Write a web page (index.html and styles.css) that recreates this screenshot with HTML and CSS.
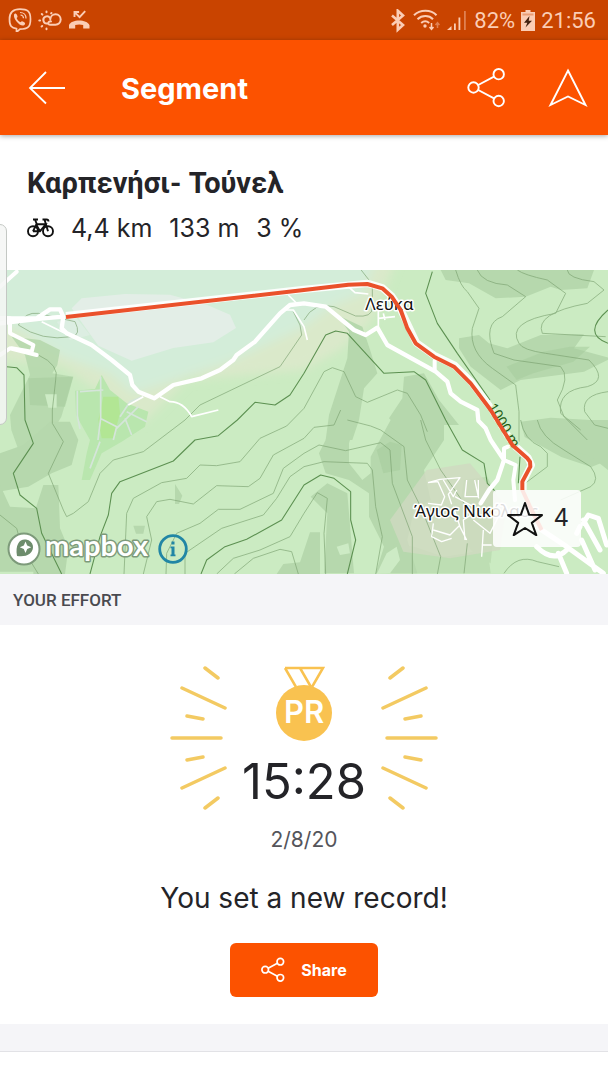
FILE: index.html
```html
<!DOCTYPE html>
<html lang="en">
<head>
<meta charset="utf-8">
<meta name="viewport" content="width=device-width, initial-scale=1">
<title>Segment</title>
<link rel="stylesheet" href="styles.css">
</head>
<body>
<div class="status">
  <div class="status-group">
    <svg class="status-icon" viewBox="0 0 24 24" width="24" height="24" fill="none" stroke="currentColor" stroke-width="1.7"><path d="M12 1.2c7.500 0 10.500 2 10.500 10s-3 10-10.500 10l-3.500 3v-3.500C3.500 20 1.500 18 1.500 11.200S4.500 1.200 12 1.200z"/><path fill="currentColor" stroke="none" d="M6 6.500c1-1.500 2-1.500 3 .5s.5 2.200-.4 3c.7 2 2 3.300 4 4.200.9-1.200 1.600-1.300 3.200-.2 1.800 1.200 1.700 2 .2 3.300C12 19 5 11 6 6.500z"/><path stroke-width="1.200" d="M12 4.500c4 0 6 2.500 6 6M12.500 7c2 .2 3 1.500 3 3.200"/></svg>
    <svg class="status-icon" viewBox="0 0 24 24" width="24" height="24" fill="none" stroke="currentColor" stroke-width="2" stroke-linecap="round"><path d="M9.500 15.500a3.600 3.600 0 1 1 2.500-5.500M13 13.500c-2.500-1-4.500 3.200-.5 3.200h5a5.200 5.200 0 1 0-5.200-5.500M8.500 3.500v.8M3.800 6l.6.6M1.300 12.500h.8M3.600 18.500l.6-.5M8.500 20.500v.8M13.500 5l-.4.4"/></svg>
    <svg class="status-icon" viewBox="0 0 24 24" width="24" height="24"><path fill="currentColor" d="M1 20.500v-3.200C3 11 19 11 21.500 17.300v3.200h-6.300v-3.400c-2.600-.9-5.400-.9-8 0v3.400z"/><path fill="none" stroke="currentColor" stroke-width="1.900" d="M6.500 9V4h4.600M6.800 4.300l4.800 4.800 5.600-6"/></svg>
  </div>
  <div class="status-group status-right">
    <svg viewBox="0 0 16 24" width="16" height="24" fill="none" stroke="currentColor" stroke-width="2.600"><path d="M2 6.500l11 9.500-5.200 4.800V1.700L13 6.500 2 16"/></svg>
    <svg viewBox="0 0 28 24" width="28" height="24" fill="none" stroke="currentColor" stroke-width="2"><path d="M2 6.200c6-6 17-6 22.500 0M5.500 10.200c4.500-4.200 11.500-4.200 15.500 0M9.200 14c2.600-2.200 5.500-2.200 8 0"/><circle cx="13" cy="17" r="1.700" fill="currentColor" stroke="none"/><path stroke-width="1.500" d="M19.500 14v6M17.500 18l2 2.300 2-2.300"/><path stroke-width="1.500" opacity=".45" d="M25.500 19v-5.500M23.500 16l2-2.300 2 2.300"/></svg>
    <svg viewBox="0 0 22 24" width="22" height="24" fill="currentColor"><path d="M1 21l4.500-4v4zM8 14.500h1.800V21H8zM12.500 8.500h1.800V21h-1.800z"/><path opacity=".45" d="M18 2h1.800v19H18z"/></svg>
    <span>82%</span>
    <svg viewBox="0 0 14 24" width="14" height="24"><path fill="currentColor" d="M4.500 1h5v2H14v19H0v-19h4.500z"/><path fill="#c94400" opacity=".35" d="M1.500 4.500h11v2h-11z"/><path fill="#43210f" d="M8.500 7L3 13.700h3.300L4.500 18.500l6.500-6.800H7.700z"/></svg>
    <span>21:56</span>
  </div>
</div>

<header class="appbar">
  <button class="icon-btn" aria-label="Back"><svg viewBox="0 0 38 36" width="38" height="36" fill="none" stroke="#fff" stroke-width="1.800"><path d="M37 18H2M18 2L2 18l16 15.500"/></svg></button>
  <h1 class="appbar-title">Segment</h1>
  <button class="icon-btn" aria-label="Share segment"><svg viewBox="0 0 40 40" width="40" height="40" fill="none" stroke="#fff" stroke-width="1.900"><circle cx="6.500" cy="19.500" r="5.200"/><circle cx="31.700" cy="6.200" r="5.200"/><circle cx="31.700" cy="33" r="5.200"/><path d="M11.200 17L27 8.700M11.200 22L27 30.400"/></svg></button>
  <button class="icon-btn" aria-label="Navigate"><svg viewBox="0 0 40 40" width="40" height="40" fill="none" stroke="#fff" stroke-width="1.900"><path d="M20 2.500L37.500 37 20 28.500 2.500 37z"/></svg></button>
</header>

<main>
  <section class="info">
    <h2 class="name">Καρπενήσι- Τούνελ</h2>
    <div class="meta">
      <svg viewBox="0 0 27 20" width="27" height="20" fill="none" stroke="#111" stroke-width="1.900"><circle cx="6" cy="13.300" r="5"/><circle cx="21" cy="13.300" r="5"/><path d="M6 13.300l3.400-7h9.300l-5.700 7H6M9.400 7l3.600 6.300M6 1.500h5M8 1.500l2 5.200M15.500 1.500h4c1.500 0 2 1 2 2M17.500 1.500L21 13.300"/></svg>
      <span>4,4 km</span><span>133 m</span><span>3 %</span>
    </div>
  </section>

  <section class="map" aria-label="Map">
    <svg class="map-art" viewBox="0 810 1824 912" preserveAspectRatio="xMidYMid slice">
      <defs>
        <filter id="soft" x="-20%" y="-20%" width="140%" height="140%"><feGaussianBlur stdDeviation="14"/></filter>
      </defs>
      <path fill="#cbebc2" d="M0 810h1824v912H0z"/>
      <!-- valley -->
      <g filter="url(#soft)">
        <path fill="#dae9ca" d="M0 930L0 1080 190 1100 430 1270 560 1140 912 1110 1020 1050 1110 970 1190 780H0z"/>
        <path fill="#d3edd9" d="M-40 770V960L60 990 190 1070 330 1120 400 1180 700 1080 912 980 1000 915 1090 880 1130 770z"/>
      </g>
      <path fill="#e3eee7" d="M215 925l30-30 130-13 135 2 110 30 70 30 18 40-68 43-120 17-125 38-100-45z"/>
      <path fill="#e3eee7" opacity=".6" d="M170 965l60-10 40 50-60 15z"/>
      <!-- forest shade -->
      <g fill="#b6d8ad">
        <path d="M35 1010l85 10 60 30-8 45-15 25 62 10-20 70-15 50-20 35-55 60-50 15-25-70-4-45 60-120-15-60z" opacity=".9"/>
        <path d="M0 1360l70-25 80-70 60 0 25 55-20 75-60 25-70 40-60 10-60 10z"/>
        <path d="M130 1455l45 0 5 130 25 60-10 77H100l5-190zM0 1455l30 65 80 5 0 190H0z"/>
        <path d="M400 1577l35 0-5 24-22 0zM525 1452l22 35-10 25-12 0zM830 1722l20-30 50-5 30-90 30 0 0 125z"/>
      </g>
      <g transform="translate(912 795)" fill="#b6d8ad">
        <path d="M100 150l75 35 25 75 20 65-40 45-15 95-20 60-80 0 10-75 55-170 5-80zM300 335l60-10 45 80 60 75h-190l-20-20 40-60z"/>
        <path d="M410 15h460l-20 55-80 5-30-10-75 30-90 5-80-45-70-10zM465 220l60-10 30 25 55 15 100-40 130-2-30 42 110 30-80 40-190 25-60 30-90-70-35-55z"/>
        <path d="M650 470l90-12 172 10v118l-50 20-90-30-110-60z"/>
      </g>
      <g transform="translate(912 1260)" fill="#b6d8ad">
        <path d="M75 0h80l-20 70 0 60 40 50 25-20 0-50 60-110h160l0 60-60 90 20 90-50 30-20 90 30 100H215l25-80-45-90 0-70-60-40-70-20-20-60 30-60z"/>
        <path d="M20 230l50-40 60 30 20 240H60l10-180z"/>
        <path d="M270 370l60 10 90 30 70-10 60-20 10 80H260zM480 180l70-10 30 60-20 200-60-40-40-90z" opacity=".7"/>
        <path d="M700 0h212v150l-50-40-130-40z"/>
      </g>
      <g fill="#a5cc9c" opacity=".55">
        <path d="M1520 1100l110-45 80-15 60 0-50 45-120 35-50 20zM1130 1350l40-25 35 10-5 75-50 10zM85 1135l135-5-25 90-105-5z"/>
      </g>
      <path fill="#cdebc5" d="M1010 1640l35-10 5 30-30 5zM1160 1660l30-20 10 40-30 40-40 2zM135 1183h35v40h-25z"/>
      <!-- village and park -->
      <path fill="#cfdac1" opacity=".8" d="M1170 1560l110-150 130-20 110 130-20 130-150 25-140-20z"/>
      <path fill="#b9e6ae" d="M225 1172l60-5 20-42 25 45 50 40 65 25-10 45-70 45-60 35-35 80h-25l15-80 10-40-42-75z"/>
      <path fill="#b2e694" d="M310 1190l45 0 5 50-20 75-35 0-10-55z"/>
      <g fill="none" stroke="#d5e5da" stroke-width="5">
        <path d="M232 1172v75l8 40M240 1175l70-5M302 1130v125l-8 65M300 1255l50 25-10 40M350 1285l65-65M360 1250l30-45 35-15M380 1235l60 30M375 1255l20 50M300 1325l-30 80"/>
      </g>
      <!-- contour lines -->
      <g fill="none" stroke="#789f6e" stroke-width="2.500" opacity=".75" stroke-linejoin="round">
        <path d="M55 975q20-40 60-35l110 25q20 40-10 45-90 15-160-35M115 1065q65 30 52 75l-10 90 0 40L190 1325 145 1420 190 1530 200 1550 220 1540 265 1505 300 1420 340 1380 430 1355 555 1260 600 1215 840 1100 905 1005 900 975 880 935"/>
        <path d="M372 1722L380 1540 400 1495 485 1448 560 1435 600 1395 650 1397 720 1385 780 1315 860 1278 912 1225"/>
        <path d="M430 1722L455 1620 440 1550 470 1505 510 1498 580 1512 650 1457 745 1460 780 1435 820 1365 912 1315"/>
        <path d="M498 1722L500 1660 530 1600 600 1570 655 1528 720 1528 820 1480 850 1405 912 1360M555 1722V1660L665 1585 790 1545 830 1495 870 1430 912 1400"/>
        <path d="M650 1722L700 1675 780 1650 870 1610 912 1540M703 1722L760 1675 840 1648 875 1655 895 1722M0 1545L50 1585 65 1640 115 1722"/>
      </g>
      <g transform="translate(912 795)" fill="none" stroke="#789f6e" stroke-width="2.500" opacity=".75" stroke-linejoin="round">
        <path d="M0 165q30-55 90-40l65 28q50 5 50-25l0-70-35-45M0 430L60 320 85 308 120 320 155 395 190 412 280 375 310 385 350 450 370 500"/>
        <path d="M455 15q15 50 35 65l35 50-20 60q-10 70 60 120l70 50 10 80v90M520 15q15 40 90 45l55 35-70 60q-60 20-25 110l60 20 140 20q30 30-10 100l20 50 70 70"/>
        <path d="M640 15q20 15 90 30l55 40-30 60q-150 25-110 90 10 20 80 30l130 20q60 60-5 80-90 10-80 80l60 50M790 15q0 25 80 35l30 25-50 40q-160 30-135 90l190 10M912 380q-80 10-70 60l30 40 40 10"/>
      </g>
      <g transform="translate(912 1260)" fill="none" stroke="#789f6e" stroke-width="2.500" opacity=".75" stroke-linejoin="round">
        <path d="M0 55L30 22 90 15 110-30M130 0L200 18 230 30 300 80 310 180 350 260 410 410 400 463"/>
        <path d="M0 100L45 75 125 92 230 68 258 90 265 190 325 350V463M0 140L60 125 190 130 205 150 215 260 235 350 215 463M0 280L40 218 70 235 60 340 65 463"/>
        <path d="M350 0L365 60 410 150 480 250M490 370l-10 90M600 460q40-60 100-35l65 15M650 0q10 60 60 80l20 20v40l-80 60M700 0q10 50 80 90l80 50q30 40 0 60l-90 40"/>
      </g>
      <g fill="none" stroke="#5c9051" stroke-width="3.200" stroke-linejoin="round">
        <path d="M20 1100L50 1103 72 1125 75 1260 100 1330 40 1420 60 1485 110 1525 125 1600 185 1722M270 1722L300 1610 325 1545 335 1480 360 1445 520 1383 585 1320 655 1307 712 1260 765 1207 825 1215 870 1185 912 1120 977 1005 1007 993 1042 1000 1152 1120 1242 1115 1277 1140 1337 1260 1387 1350 1452 1390 1462 1450 1487 1475"/>
        <path d="M603 1722L620 1680 675 1640 740 1618 845 1560 912 1455 962 1425 1002 1435 1052 1475V1560L1067 1620 1042 1722M1297 815L1277 880 1312 970 1372 1060 1470 1200M1560 1370L1555 1450M1824 930q-80 70 0 100"/>
      </g>
      <!-- local roads -->
      <g fill="none" stroke="#fff" stroke-width="5" stroke-linejoin="round">
        <path d="M125 965l70 35M385 1215l45-25M480 1190l30 15q40 0 65 45l80-20M865 885l30 30M850 930l30 0 32 50 10 40M1045 860l20 18 40 4M1135 930v55M1135 955l50-5M1150 940l5 20"/>
        <path stroke-width="4" d="M1284 1448l36-10 60-5-35 50 10 30M1284 1448l30-3 20 45-10 25-40-5M1330 1440l30 50 10-20M1400 1440l-5 50 40 0 0-50M1424 1440l12 55M1300 1570l-5 40 30 15 30-10M1300 1590l50 15 30-30M1360 1520l20 60 20 40M1395 1620l-5-60 30-20M1450 1590l-5 80M1445 1635l30 0M1420 1560l50 40 25-50M1365 1490l55 30"/>
      </g>
      <!-- roads -->
      <g fill="none" stroke="#fff" stroke-linejoin="round" stroke-linecap="round">
        <path stroke-width="13" d="M0 955H110L150 928 180 928 190 950 185 985 200 1000 275 1035 335 1080 390 1125 397 1155 415 1175 463 1195 520 1155 605 1135 660 1110 700 1080 710 1065 765 1025 840 940 870 915 912 910 977 920 1062 990 1097 1005 1132 983 1162 1035 1307 1115 1342 1145 1352 1180 1382 1205 1432 1230 1435 1262 1457 1285 1472 1320 1512 1380 1492 1440 1467 1470 1442 1510M0 970L130 955 190 950"/>
        <path stroke-width="12" d="M0 955h30v45l70 35-5 20-60-10M0 1065l30-20 80 20M0 860l50-45M1304 1082v30M1512 1380L1512 1345 1535 1335M1512 1380L1547 1395 1540 1440 1545 1500"/>
        <path stroke-width="15" d="M1610 1580l90 60 110 80M1610 1640q50 50 90 10M1675 1660l25 60M1745 1620l40 90M1750 1560l50 90M1750 1570l15-25 30 10 25 80M1740 1580l-10 20"/>
      </g>
      <path fill="none" stroke="#fff" stroke-width="22" stroke-linejoin="round" opacity=".9" d="M198 947L912 868 1102 850 1147 863 1175 888 1202 928 1249 1028 1302 1066 1364 1096 1414 1146 1474 1226 1539 1333 1584 1373 1594 1395 1569 1445V1470"/>
      <g class="map-label">
        <text x="1096" y="930">Λεύκα</text>
        <text x="1242" y="1552">Άγιος Νικόλαος</text>
        <text class="elevation" transform="translate(1462 1220) rotate(59)">1000 m</text>
      </g>
      <!-- segment trace -->
      <path fill="none" stroke="#ea512b" stroke-width="12" stroke-linejoin="round" d="M198 951L912 870 1045 854 1102 852 1147 865 1175 890 1202 930 1222 985 1247 1030 1302 1070 1362 1100 1412 1150 1472 1230 1537 1335 1582 1375 1590 1385 1591 1400 1567 1445 1567 1470 1590 1520 1625 1590"/>
    </svg>
    <div class="attribution">
      <a class="mapbox" href="#" aria-label="mapbox">
        <svg viewBox="0 0 146 36" width="146" height="36"><circle cx="17" cy="18" r="15.500" fill="#fff" stroke="#7d9a7a" stroke-width="2"/><path fill="#6d8c6c" d="M10 25c-2-12 3-17.500 9-16.500 8 1.200 9 10 4 14-3.500 3-8.500 3-13 2.500z"/><path fill="#fff" d="M18.500 10.500l1.700 4 4 1.700-4 1.700-1.700 4-1.700-4-4-1.700 4-1.700z"/><text class="wordmark" x="38" y="25">mapbox</text></svg>
      </a>
      <button class="icon-btn" aria-label="Map information"><svg viewBox="0 0 30 30" width="30" height="30"><circle cx="15" cy="15" r="13.300" fill="none" stroke="#2186a5" stroke-width="2.800"/><path fill="#2186a5" d="M13.500 7.500h3v3h-3zM12.500 12.500h4v8h1v1.700h-5v-1.700h1v-6.300h-1z"/></svg></button>
    </div>
    <button class="stars" aria-label="Star, 4"><svg viewBox="0 0 36 34" width="36" height="34" fill="none" stroke="#111" stroke-width="2" stroke-linejoin="round"><path d="M18 1l4.200 11.800 12.800.3-10.200 7.800 4.500 12.300L18 26 6.700 33.200l4.500-12.300L1 13.100l12.800-.3z"/></svg><span class="star-count">4</span></button>
  </section>

  <h3 class="section-title">YOUR EFFORT</h3>

  <section class="effort">
    <div class="record">
      <svg class="rays" viewBox="0 0 58 146" width="58" height="146"><path d="M35 3l13 10M12 23l43 20M17 51l16 3M2 73h49M17 95l16-3M12 123l43-20M35 143l13-10"/></svg>
      <div class="result">
        <svg viewBox="0 0 56 76" width="56" height="76"><path fill="none" stroke="#f9c250" stroke-width="2.500" d="M9 3h38L36 22M9 3l11 19M24 3l11 19"/><circle cx="28" cy="48" r="28" fill="#f9c250"/><text class="pr" x="28" y="58" text-anchor="middle">PR</text></svg>
        <div class="time">15:28</div>
      </div>
      <svg class="rays" viewBox="0 0 58 146" width="58" height="146"><path d="M23 3L10 13M46 23L3 43M41 51l-16 3M56 73H7M41 95l-16-3M46 123L3 103M23 143l-13-10"/></svg>
    </div>
    <div class="date">2/8/20</div>
    <p class="message">You set a new record!</p>
    <button class="share"><svg viewBox="0 0 40 40" width="24" height="26" fill="none" stroke="#fff" stroke-width="2.800"><circle cx="7" cy="19.500" r="5.500"/><circle cx="32.200" cy="6.200" r="5.500"/><circle cx="32.200" cy="33" r="5.500"/><path d="M11.900 17L27.300 8.700M11.900 22l15.400 8.400"/></svg>Share</button>
  </section>
  <div class="divider"></div>
</main>
<div class="edge-handle"></div>
</body>
</html>
```
FILE: styles.css
```css
* { box-sizing: border-box; }
body {
  margin: 0;
  min-height: 100vh;
  background: #fff;
  color: #242428;
  font-family: Inter, "Noto Sans", sans-serif;
  position: relative;
}
h1, h2, h3, p { margin: 0; }
svg { display: block; flex: none; }
button { font: inherit; color: inherit; border: 0; padding: 0; background: none; cursor: pointer; }

.status {
  display: flex;
  justify-content: space-between;
  align-items: center;
  height: 40px;
  padding: 0 12px 0 8px;
  background: #c94400;
  color: #fbcdb5;
  font: 22px/40px Roboto, sans-serif;
}
.status-group { display: flex; align-items: center; gap: 6px; }
.status-right { padding-top: 2px; }

.appbar {
  position: relative;
  display: flex;
  align-items: center;
  height: 95px;
  padding: 0 20px 0 28px;
  background: #fc5200;
  color: #fff;
  box-shadow: 0 1px 5px rgba(0, 0, 0, .35);
}
.appbar-title { flex: 1; padding: 2px 0 0 55px; font-size: 29px; font-weight: 700; line-height: 36px; }
.icon-btn { display: flex; }
.icon-btn + .icon-btn { margin-left: 41px; }

.info { padding: 31px 27px 26px; }
.name { font: 700 29px/34px Roboto, sans-serif; }
.meta { display: flex; align-items: center; gap: 17px; padding-top: 12px; font-size: 25px; line-height: 32px; }

.map { position: relative; height: 304px; overflow: hidden; }
.map-art { width: 100%; height: 100%; }
.map-label { font: 51px "Noto Sans", sans-serif; fill: #111; stroke: #fff; stroke-width: 9px; stroke-linejoin: round; paint-order: stroke; }
.elevation { font-size: 42px; fill: #1e5c14; stroke: #cbebc2; }
.attribution { position: absolute; left: 7px; bottom: 7px; display: flex; align-items: center; gap: 5px; }
.wordmark { font: 700 29px Lato, sans-serif; fill: #fff; stroke: #7d9a7a; stroke-width: 3px; stroke-linejoin: round; paint-order: stroke; }
.mapbox svg { overflow: visible; }
.stars {
  position: absolute;
  right: 27px;
  bottom: 27px;
  display: flex;
  align-items: center;
  gap: 10px;
  height: 57px;
  padding: 0 12px 0 14px;
  border-radius: 4px;
  background: rgba(255, 255, 255, .86);
  font-size: 24px;
}
.star-count { padding-bottom: 3px; }

.section-title { padding: 14px 13px 13px; background: #f5f5f8; color: #4a4a50; font: 500 17px/24px Roboto, sans-serif; }

.effort { display: flex; flex-direction: column; align-items: center; padding: 40px 16px 27px; }
.record { display: flex; justify-content: center; }
.rays { fill: none; stroke: #f3ca62; stroke-width: 3.5px; stroke-linecap: round; }
.result { display: flex; flex-direction: column; align-items: center; width: 152px; }
.pr { font: 600 31px Inter, sans-serif; fill: #fff; }
.time { padding-top: 11px; font-size: 49px; line-height: 60px; }
.date { padding-top: 16px; color: #55555b; font-size: 21px; line-height: 24px; }
.message { padding-top: 28px; font-size: 28px; line-height: 36px; }
.share {
  display: flex;
  align-items: center;
  gap: 16px;
  margin-top: 27px;
  height: 54px;
  padding: 0 31px;
  border-radius: 6px;
  background: #fc5200;
  color: #fff;
  font-size: 16px;
  font-weight: 700;
}
.divider { height: 28px; background: #f5f5f8; border-bottom: 1px solid #e2e2e6; }

.edge-handle {
  position: absolute;
  left: -1px;
  top: 224px;
  width: 8px;
  height: 201px;
  border: 1px solid #c4c8c4;
  border-radius: 0 7px 7px 0;
  background: rgba(245, 246, 245, .85);
}
```
